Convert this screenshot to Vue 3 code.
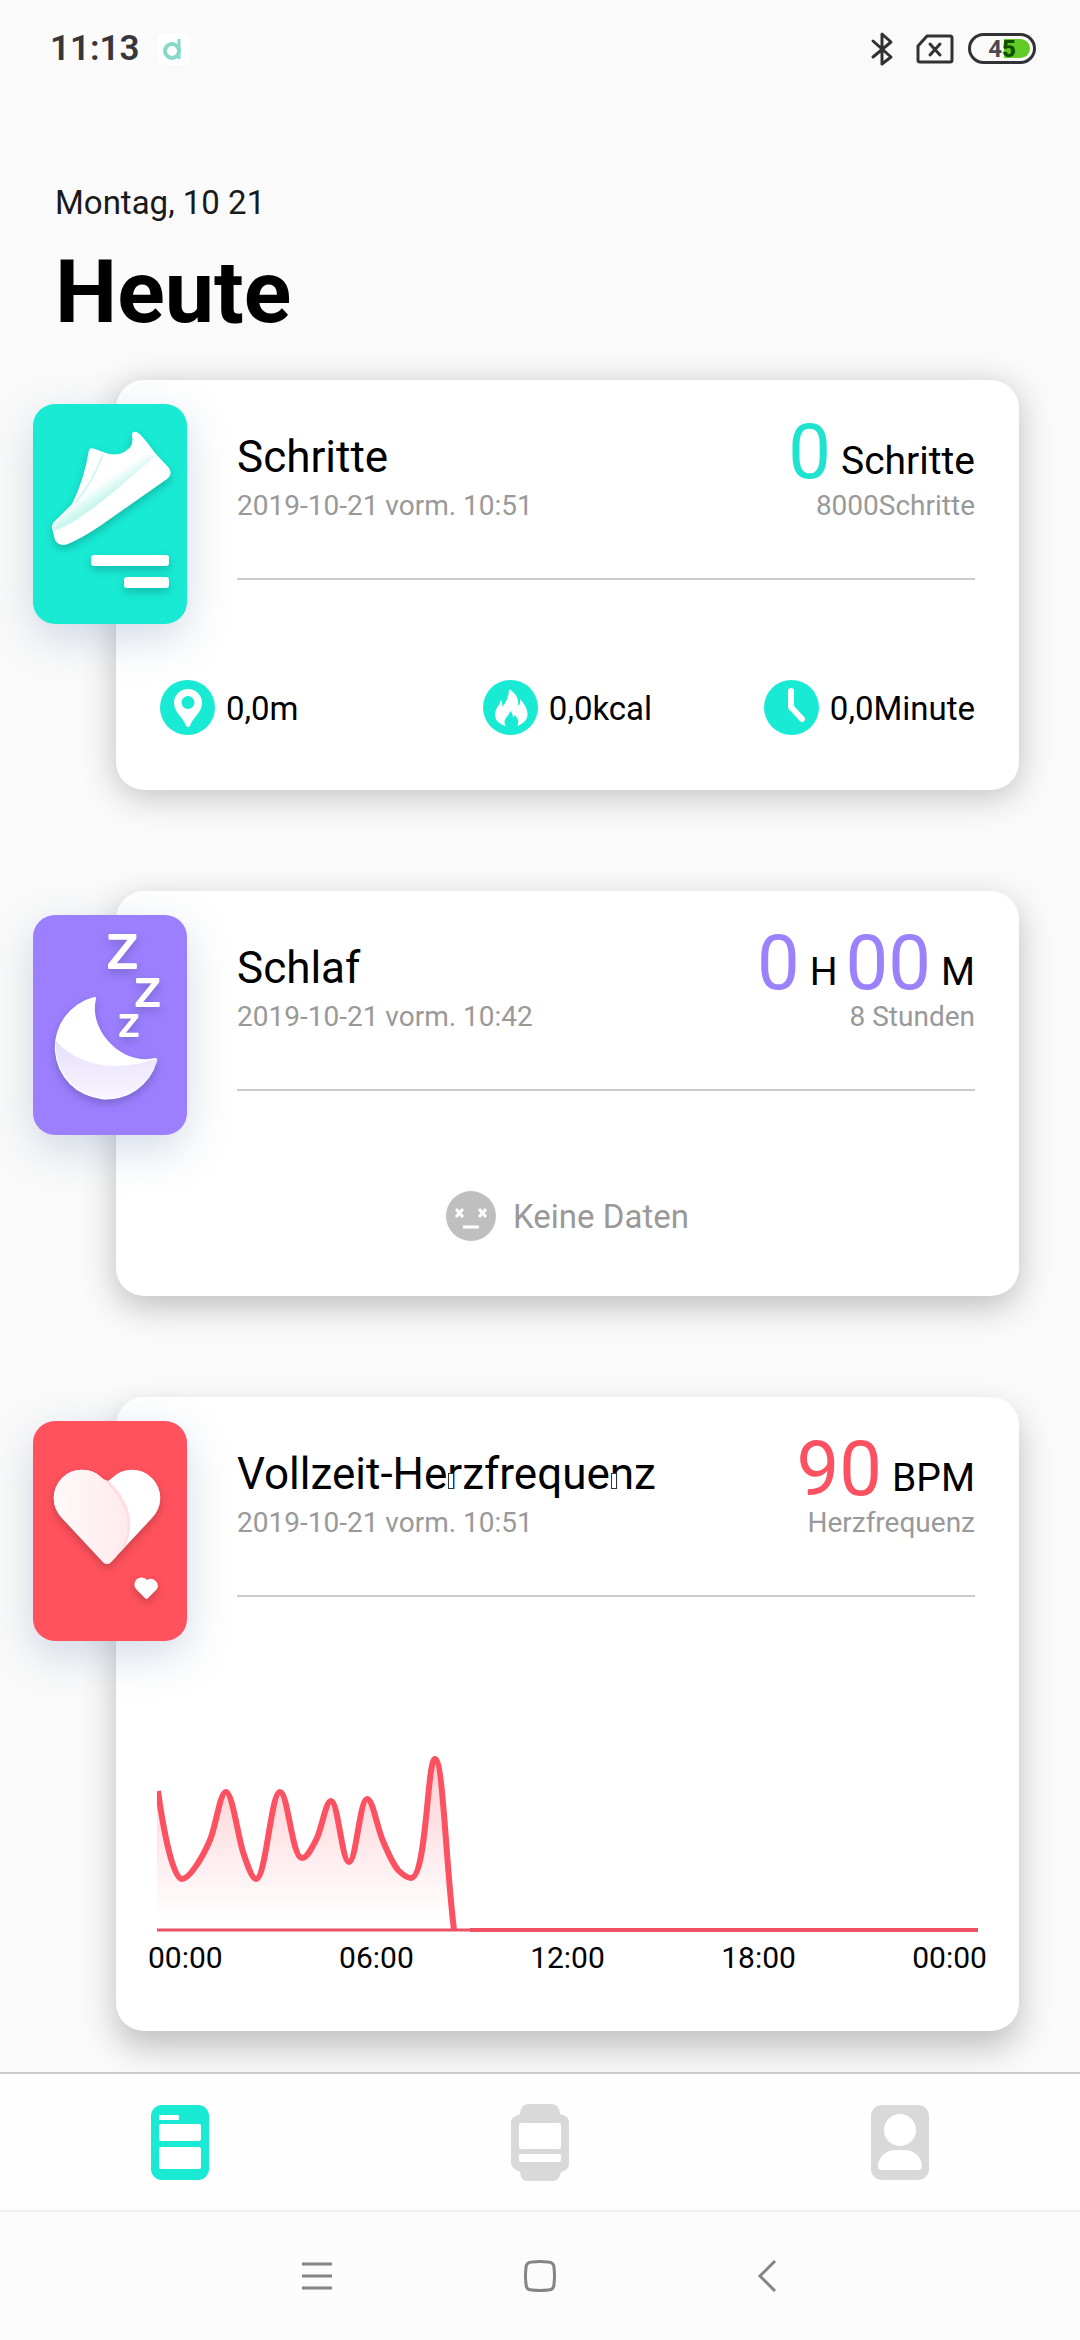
<script setup>
const cards = [
  { id: 'steps', title: 'Schritte', date: '2019-10-21 vorm. 10:51', values: [['0', 'Schritte']], goal: '8000Schritte' },
  { id: 'sleep', title: 'Schlaf', date: '2019-10-21 vorm. 10:42', values: [['0', 'H'], ['00', 'M']], goal: '8 Stunden' },
  { id: 'heart', title: 'Vollzeit-Herzfrequenz', date: '2019-10-21 vorm. 10:51', values: [['90', 'BPM']], goal: 'Herzfrequenz' },
]
const hours = ['00:00', '06:00', '12:00', '18:00', '00:00']
const curve =
  'M1 95 C5 125 15 183 25 183 C32 183 45 163 53 144 C59 130 63 96 69 96 C75 96 81 140 86 156 C90 168 95 183 99 183 C109 183 114 96 123 96 C131 96 135 162 145 162 C150 162 155 152 160 142 C165 131 169 105 174 105 C181 105 185 166 192 166 C199 166 203 103 210 103 C216 103 220 132 226 145 C231 157 236 168 241 174 C246 179 251 182 254 182 C270 182 270 63 278 63 C286 63 289 170 297 234'
</script>

<template>
  <div class="screen">
    <header class="status">
      <span class="clock">11:13</span>
      <svg class="app-mark" viewBox="0 0 32 32" aria-hidden="true">
        <rect width="32" height="32" rx="6" fill="#fff" />
        <circle cx="14" cy="18" r="7" fill="none" stroke="#86d9c9" stroke-width="4" />
        <path d="M21 6 V26" stroke="#86d9c9" stroke-width="3" />
      </svg>
      <div class="status-right">
        <svg class="bluetooth" viewBox="0 0 24 36" fill="none" stroke="#323136" stroke-width="3" stroke-linejoin="round" stroke-linecap="round" aria-hidden="true">
          <path d="M3 10 L21 26 L12 33 V3 L21 11 L3 26" />
        </svg>
        <svg class="sim" viewBox="0 0 38 30" fill="none" stroke="#323136" stroke-width="3" stroke-linejoin="round" stroke-linecap="round" aria-hidden="true">
          <path d="M11 2 H34 Q36 2 36 4 V26 Q36 28 34 28 H4 Q2 28 2 26 V12 Z M14 10 L24 21 M24 10 L14 21" />
        </svg>
        <span class="battery"><span class="level"></span><span class="charge">4<b>5</b></span></span>
      </div>
    </header>

    <div class="heading">
      <p class="today">Montag, 10 21</p>
      <h1>Heute</h1>
    </div>

    <main class="cards">
      <section v-for="card in cards" :key="card.id" class="card" :class="card.id">
        <div class="badge">
          <svg v-if="card.id === 'steps'" viewBox="0 0 154 220" aria-hidden="true">
            <defs>
              <linearGradient id="soleShade" gradientUnits="userSpaceOnUse" x1="66" y1="80" x2="74" y2="92">
                <stop offset="0" stop-color="#fff" />
                <stop offset="1" stop-color="#c9f6ee" />
              </linearGradient>
            </defs>
            <g class="drop">
              <path fill="#fff" d="M103 28 Q107 28 122 49 L136 64 Q140 70 134 75 L67 122 Q49 134 35 140 Q26 143 22 136 L19 124 Q18 120 24 115 L39 100 Q51 76 56 46 Q57 43 62 45 L70 48 Q85 54 94 46 Q101 42 99 31 Q99 27 103 28 Z" />
              <path fill="url(#soleShade)" d="M70 49 Q84 54 95 46 L122 52 Q70 98 56 107 Q40 120 21 127 L20 122 L40 100 Q54 78 70 49 Z" />
              <path d="M70 50 Q60 78 42 99" fill="none" stroke="#d3f6f0" stroke-width="2" />
              <rect x="58" y="151" width="78" height="11" rx="3" fill="#fff" />
              <rect x="91" y="173" width="45" height="11" rx="3" fill="#fff" />
            </g>
          </svg>
          <svg v-else-if="card.id === 'sleep'" viewBox="0 0 154 220" aria-hidden="true">
            <defs>
              <linearGradient id="moonShade" x1="0" y1="0" x2="0" y2="1">
                <stop offset="0" stop-color="#e6dffb" />
                <stop offset="1" stop-color="#f8f5ff" />
              </linearGradient>
            </defs>
            <g class="drop" font-family="DejaVu Sans, sans-serif" fill="#fff">
              <path d="M61 82 Q63 81 63 84 C55 116 90 151 122 143 Q125 143 124 146 A52 52 0 1 1 61 82 Z" />
              <path fill="url(#moonShade)" d="M23 126 C45 150 80 158 122 144 Q125 143 124 146 A52 52 0 0 1 74 183 A52 52 0 0 1 23 126 Z" />
              <g stroke="#fff" stroke-width="2" stroke-linejoin="round">
                <text x="74" y="53" font-size="45">Z</text>
                <text x="102" y="91" font-size="37">Z</text>
                <text x="86" y="121" font-size="29">Z</text>
              </g>
            </g>
          </svg>
          <svg v-else viewBox="0 0 154 220" aria-hidden="true">
            <defs>
              <linearGradient id="leafShade" x1="0" y1="0" x2="1" y2="0">
                <stop offset="0" stop-color="#fff9fa" />
                <stop offset="1" stop-color="#ffeaed" />
              </linearGradient>
            </defs>
            <g class="drop">
              <path fill="#fff" d="M70 141 L29 97 A28 28 0 1 1 69 57 L74 61 L79 57 A28 28 0 1 1 119 97 L78 141 Q74 145 70 141 Z" />
              <path fill="#ffdde3" d="M70 58 L76 60 Q108 92 92 126 L82 136 Z" />
              <path fill="url(#leafShade)" d="M70 141 L29 97 A28 28 0 0 1 69 57 Q112 98 83 136 L78 141 Q74 145 70 141 Z" />
              <path fill="#fff" d="M112 177 L103 168 A7 7 0 0 1 114 159 A7 7 0 0 1 124 168 L115 177 Q114 179 112 177 Z" />
            </g>
          </svg>
        </div>

        <div class="head">
          <div class="info">
            <h2 v-if="card.id !== 'heart'">{{ card.title }}</h2>
            <h2 v-else>Vollzeit-He<i class="missing"></i>rzfreque<i class="missing"></i>nz</h2>
            <p class="muted">{{ card.date }}</p>
          </div>
          <div class="result">
            <p class="value">
              <template v-for="[num, unit] in card.values" :key="unit">
                <span class="num">{{ num }}</span><span class="unit">{{ unit }}</span>
              </template>
            </p>
            <p class="muted">{{ card.goal }}</p>
          </div>
        </div>

        <ul v-if="card.id === 'steps'" class="stats">
          <li>
            <svg viewBox="0 0 55 55" aria-hidden="true">
              <circle class="disc" cx="27.500" cy="27.500" r="27.500" />
              <path fill="#fff" fill-rule="evenodd" d="M28 9 A14 14 0 0 0 14 23 C14 33 24 38 26 46 Q28 48 30 46 C32 38 42 33 42 23 A14 14 0 0 0 28 9 Z M28 16 A6 6 0 1 1 28 29 A6 6 0 1 1 28 16 Z" />
            </svg>
            <span>0,0m</span>
          </li>
          <li>
            <svg viewBox="0 0 55 55" aria-hidden="true">
              <circle class="disc" cx="27.500" cy="27.500" r="27.500" />
              <path fill="#fff" d="M26 9 C34 14 36 20 35 26 Q38 24 37 19 C47 30 48 41 34 46 C37 41 34 38 32 35 L30 38 Q30 33 27 31 C27 36 18 39 23 46 C11 43 9 33 16 25 L18 20 Q20 23 19 27 C23 23 26 16 26 9 Z" />
            </svg>
            <span>0,0kcal</span>
          </li>
          <li>
            <svg viewBox="0 0 55 55" aria-hidden="true">
              <circle class="disc" cx="27.500" cy="27.500" r="27.500" />
              <path fill="none" stroke="#fff" stroke-width="6" stroke-linecap="round" stroke-linejoin="round" d="M27 11 V27 L38 39" />
            </svg>
            <span>0,0Minute</span>
          </li>
        </ul>

        <div v-else-if="card.id === 'sleep'" class="empty">
          <svg viewBox="0 0 50 50" aria-hidden="true">
            <circle cx="25" cy="25" r="25" fill="#bfbfbf" />
            <path d="M10 18 L17 26 M17 18 L10 26 M33 18 L40 26 M40 18 L33 26 M17 36 H33" fill="none" stroke="#fff" stroke-width="3" />
          </svg>
          <span>Keine Daten</span>
        </div>

        <div v-else class="chart">
          <svg viewBox="0 0 821 236" preserveAspectRatio="none" role="img" aria-label="Herzfrequenz">
            <defs>
              <linearGradient id="pulse" gradientUnits="userSpaceOnUse" x1="0" y1="63" x2="0" y2="222">
                <stop offset="0" stop-color="#fb4f60" stop-opacity="0.280" />
                <stop offset="1" stop-color="#fb4f60" stop-opacity="0" />
              </linearGradient>
            </defs>
            <path :d="curve + ' H0 V95 Z'" fill="url(#pulse)" />
            <path :d="curve" class="line" />
            <path d="M0 234 H320" class="axis" />
            <path d="M313 234 H821" class="axis thick" />
          </svg>
          <div class="hours"><span v-for="(h, i) in hours" :key="i">{{ h }}</span></div>
        </div>
      </section>
    </main>

    <footer>
      <nav class="tabs" aria-label="Bereiche">
        <button type="button" aria-label="Heute">
          <svg viewBox="0 0 58 78" aria-hidden="true">
            <rect y="1" width="58" height="75" rx="11" fill="#18ead4" />
            <g fill="#fff">
              <rect x="8" y="11" width="20" height="5" rx="1" />
              <rect x="8" y="20" width="42" height="17" rx="2" />
              <rect x="8" y="43" width="42" height="22" rx="2" />
            </g>
          </svg>
        </button>
        <button type="button" aria-label="Gerät">
          <svg viewBox="0 0 58 78" aria-hidden="true">
            <path fill="#d9d9d9" d="M17 0 H41 Q48 0 49 10 Q58 12 58 18 V60 Q58 66 50 68 Q48 77 42 77 H16 Q10 77 9 68 Q0 64 0 59 V18 Q0 13 9 10 Q10 0 17 0 Z" />
            <rect x="8" y="19" width="42" height="26" rx="2" fill="#fff" />
            <rect x="8" y="50" width="42" height="8" rx="2" fill="#fff" />
          </svg>
        </button>
        <button type="button" aria-label="Profil">
          <svg viewBox="0 0 58 78" aria-hidden="true">
            <rect y="1" width="58" height="75" rx="11" fill="#d9d9d9" />
            <circle cx="29" cy="26" r="16" fill="#fff" />
            <path fill="#fff" d="M7 63 C7 52 16 46 24 46 H34 C42 46 51 52 51 63 Q51 66 48 66 H10 Q7 66 7 63 Z" />
          </svg>
        </button>
      </nav>
      <nav class="system" aria-label="System">
        <button type="button" aria-label="Menü">
          <svg viewBox="0 0 32 32" aria-hidden="true"><path d="M2 4 H32 M2 16 H32 M2 28 H32" /></svg>
        </button>
        <button type="button" aria-label="Startbildschirm">
          <svg viewBox="0 0 32 32" aria-hidden="true"><path d="M8 2 Q16 1 24 2 Q30 2 30 8 Q31 16 30 24 Q30 30 24 30 Q16 31 8 30 Q2 30 2 24 Q1 16 2 8 Q2 2 8 2 Z" /></svg>
        </button>
        <button type="button" aria-label="Zurück">
          <svg viewBox="0 0 32 32" aria-hidden="true"><path d="M27 1 L12 16 L27 31" /></svg>
        </button>
      </nav>
    </footer>
  </div>
</template>

<style>
body {
  margin: 0;
  background: #fafafa;
}
</style>

<style scoped>
.screen {
  display: flex;
  flex-direction: column;
  min-height: 100vh;
  overflow: hidden;
  background: #fafafa;
  color: #000;
  font-family: Roboto, sans-serif;
}
h1, h2, p, ul {
  margin: 0;
  padding: 0;
  font-weight: 400;
}
svg {
  display: block;
}
.status {
  display: flex;
  align-items: center;
  height: 97px;
  padding: 0 44px 0 50px;
}
.clock {
  color: #37363a;
  font-size: 35px;
  font-weight: 600;
  line-height: 40px;
}
.app-mark {
  width: 32px;
  height: 32px;
  margin-left: 18px;
}
.status-right {
  display: flex;
  align-items: center;
  margin-left: auto;
}
.bluetooth {
  width: 24px;
  height: 36px;
  margin-right: 22px;
}
.sim {
  width: 38px;
  height: 30px;
  margin-right: 14px;
}
.battery {
  position: relative;
  display: flex;
  align-items: center;
  justify-content: center;
  box-sizing: border-box;
  width: 68px;
  height: 31px;
  border: 3px solid #323136;
  border-radius: 16px;
}
.level {
  position: absolute;
  top: 3px;
  right: 3px;
  bottom: 3px;
  width: 26px;
  border-radius: 0 10px 10px 0;
  background: #61cb24;
}
.charge {
  position: relative;
  color: #4a4a4c;
  font-size: 24px;
  font-weight: 700;
  line-height: 24px;
}
.charge b {
  color: #0e5200;
}
.heading {
  padding: 86px 55px 38px;
}
.today {
  color: #1a1a1a;
  font-size: 33px;
  line-height: 40px;
}
h1 {
  margin-top: 19px;
  font-size: 88px;
  font-weight: 700;
  line-height: 100px;
}
.cards {
  display: flex;
  flex-direction: column;
  gap: 101px;
  padding: 0 61px 40px 116px;
}
.card {
  position: relative;
  padding: 37px 44px 55px;
  border-radius: 28px;
  background: #fff;
}
.steps {
  --tint: #18ead4;
  --num: #1fe2cf;
  box-shadow: 0 6px 34px rgba(0, 0, 0, 0.24);
}
.sleep {
  --tint: #9b7fff;
  --num: #9b82fb;
  box-shadow: 0 11px 34px rgba(0, 0, 0, 0.24);
}
.heart {
  --tint: #ff525c;
  --num: #fb5160;
  box-shadow: 0 16px 34px rgba(0, 0, 0, 0.24);
}
.badge {
  position: absolute;
  top: 24px;
  left: -83px;
  width: 154px;
  height: 220px;
  border-radius: 22px;
  background: var(--tint);
  box-shadow: 0 14px 44px rgba(110, 135, 175, 0.3);
}
.drop {
  filter: drop-shadow(0 4px 4px rgba(0, 0, 0, 0.2));
}
.head {
  display: flex;
  align-items: flex-end;
  justify-content: space-between;
  margin-left: 77px;
  padding-bottom: 53px;
  border-bottom: 2px solid #ccc;
}
h2 {
  margin-bottom: 4px;
  font-size: 44px;
  line-height: 52px;
}
.missing {
  position: relative;
}
.missing::after {
  content: "";
  position: absolute;
  left: 1px;
  bottom: 11px;
  box-sizing: border-box;
  width: 6px;
  height: 16px;
  border: 1px solid #333;
  background: #fff;
}
.muted {
  color: #999;
  font-size: 28px;
  line-height: 38px;
}
.result {
  text-align: right;
}
.value {
  display: flex;
  align-items: flex-end;
  justify-content: flex-end;
}
.num {
  color: var(--num);
  font-size: 76px;
  line-height: 70px;
}
.unit {
  padding-left: 10px;
  font-size: 39px;
  line-height: 52px;
}
.unit + .num {
  padding-left: 8px;
}
.stats {
  display: grid;
  grid-template-columns: repeat(3, 1fr);
  margin-top: 100px;
  list-style: none;
  font-size: 33px;
  line-height: 40px;
}
.stats li {
  display: flex;
  align-items: center;
  gap: 11px;
}
.stats li:nth-child(2) {
  justify-content: center;
}
.stats li:nth-child(3) {
  justify-content: flex-end;
}
.stats svg {
  width: 55px;
  height: 55px;
}
.disc {
  fill: #18ead4;
}
.stats span,
.empty span {
  padding-top: 2px;
}
.empty {
  display: flex;
  align-items: center;
  justify-content: center;
  gap: 17px;
  margin-top: 100px;
  color: #999;
  font-size: 33px;
  line-height: 40px;
}
.empty svg {
  width: 50px;
  height: 50px;
}
.chart {
  margin: 99px -12px 0;
}
.chart svg {
  box-sizing: border-box;
  width: 100%;
  height: 236px;
  padding: 0 9px;
}
.line {
  fill: none;
  stroke: #fb5160;
  stroke-width: 6px;
  vector-effect: non-scaling-stroke;
}
.axis {
  stroke: #ee5064;
  stroke-width: 3px;
  vector-effect: non-scaling-stroke;
}
.thick {
  stroke-width: 4px;
}
.hours {
  display: flex;
  justify-content: space-between;
  margin-top: 8px;
  font-size: 30px;
  line-height: 36px;
}
footer {
  position: relative;
  margin-top: auto;
  background: #fefefe;
}
button {
  display: flex;
  align-items: center;
  justify-content: center;
  padding: 0;
  border: 0;
  background: none;
}
.tabs {
  display: grid;
  grid-template-columns: repeat(3, 1fr);
  height: 134px;
  padding-top: 2px;
  border-top: 2px solid #ccc;
}
.tabs svg {
  width: 58px;
  height: 78px;
}
.system {
  display: flex;
  align-items: center;
  justify-content: center;
  gap: 96px;
  height: 128px;
  border-top: 2px solid #efefef;
  background: #fcfcfc;
}
.system button {
  width: 128px;
  height: 96px;
}
.system svg {
  width: 32px;
  height: 32px;
  fill: none;
  stroke: #858585;
  stroke-width: 3px;
}
</style>
